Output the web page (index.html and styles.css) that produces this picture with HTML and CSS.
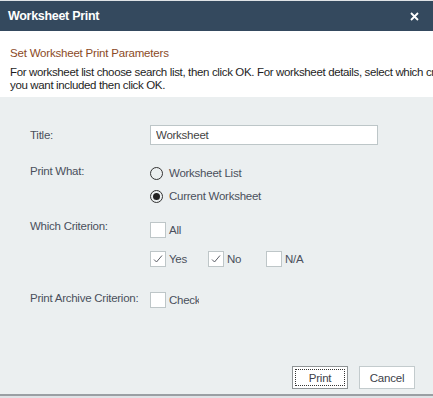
FILE: index.html
```html
<!DOCTYPE html>
<html lang="en">
<head>
    <meta charset="UTF-8">
    <title>Worksheet Print</title>
    <link rel="stylesheet" href="styles.css">
</head>
<body>

<div class="dialog">
    <div class="titlebar">
        <span class="title">Worksheet Print</span>
        <svg class="close" width="9" height="9" viewBox="0 0 9 9">
            <path d="M1 1 L8 8 M8 1 L1 8" stroke="#ffffff" stroke-width="1.8"/>
        </svg>
    </div>

    <div class="header">
        <h4>Set Worksheet Print Parameters</h4>
        <p>For worksheet list choose search list, then click OK. For worksheet details, select which criteria<br>you want included then click OK.</p>
    </div>

    <div class="body">
        <div class="row row-title">
            <label>Title:</label>
            <input type="text" class="text-input" value="Worksheet">
        </div>

        <div class="row row-what">
            <label>Print What:</label>
            <div class="options radios">
                <div class="option"><span class="radio"></span>Worksheet List</div>
                <div class="option"><span class="radio checked"></span>Current Worksheet</div>
            </div>
        </div>

        <div class="row row-criterion">
            <label>Which Criterion:</label>
            <div class="options checks">
                <div class="option"><span class="check"></span>All</div>
                <div class="option-line">
                    <div class="option w58"><span class="check"><svg width="14" height="14" viewBox="0 0 14 14"><path d="M3 7.5 L5.5 10 L11 3.5" fill="none" stroke="#5a5d66" stroke-width="1"/></svg></span>Yes</div>
                    <div class="option w58"><span class="check"><svg width="14" height="14" viewBox="0 0 14 14"><path d="M3 7.5 L5.5 10 L11 3.5" fill="none" stroke="#5a5d66" stroke-width="1"/></svg></span>No</div>
                    <div class="option"><span class="check"></span>N/A</div>
                </div>
            </div>
        </div>

        <div class="row row-archive">
            <label>Print Archive Criterion:</label>
            <div class="option clip"><span class="check"></span>CheckEdit</div>
        </div>

        <div class="buttons">
            <button class="btn focused">Print</button>
            <button class="btn">Cancel</button>
        </div>
    </div>
</div>

</body>
</html>
```

FILE: styles.css
```css
* {
    margin: 0;
    padding: 0;
    box-sizing: border-box;
    font-family: 'Liberation Sans', Arial, sans-serif;
}

body {
    width: 433px;
    height: 398px;
    overflow: hidden;
    background-color: #dfe3e6;
}

.dialog {
    margin-top: 1px;
    width: 433px;
    height: 395px;
    border-bottom: 2px solid #9a9fa3;
    display: flex;
    flex-direction: column;
}

.titlebar {
    height: 30px;
    flex-shrink: 0;
    background-color: #34495e;
    color: #ffffff;
    display: flex;
    align-items: center;
    justify-content: space-between;
    padding: 0 14px 0 8px;
}

.title {
    font-size: 12.5px;
    font-weight: bold;
    letter-spacing: -0.3px;
}

.header {
    background-color: #ffffff;
    height: 66px;
    flex-shrink: 0;
    padding: 15px 0 0 10px;
    white-space: nowrap;
    overflow: hidden;
    font-size: 11.5px;
    letter-spacing: -0.35px;
}

.header h4 {
    font-weight: normal;
    font-size: 11.5px;
    line-height: 14px;
    letter-spacing: -0.2px;
    color: #8b4a26;
    margin-bottom: 6px;
}

.header p {
    line-height: 13px;
    color: #1e1e1e;
}

.body {
    flex: 1;
    background-color: #ebeff0;
    padding: 28px 0 0 30px;
    display: flex;
    flex-direction: column;
    color: #4a4f5c;
    font-size: 11.5px;
    line-height: 14px;
    letter-spacing: -0.25px;
}

.row {
    display: flex;
    align-items: flex-start;
}

.row label {
    width: 120px;
    flex-shrink: 0;
}

.row-title {
    align-items: center;
}

.text-input {
    width: 228px;
    height: 20px;
    border: 1px solid #bdc6c8;
    background-color: #ffffff;
    padding: 0 5px;
    font-size: 11.5px;
    letter-spacing: -0.25px;
    color: #444;
    outline: none;
}

.options {
    display: flex;
    flex-direction: column;
}

.option {
    display: flex;
    align-items: center;
    height: 16px;
    white-space: nowrap;
}

.row-what {
    margin-top: 19px;
}

.radios {
    gap: 7px;
    margin-top: 1px;
}

.radio {
    width: 13px;
    height: 13px;
    flex-shrink: 0;
    border: 1px solid #333;
    border-radius: 50%;
    margin-right: 6px;
    display: flex;
    align-items: center;
    justify-content: center;
}

.radio.checked::after {
    content: "";
    width: 7px;
    height: 7px;
    border-radius: 50%;
    background-color: #222;
}

.row-criterion {
    margin-top: 15px;
}

.checks {
    gap: 13px;
    margin-top: 3px;
}

.option-line {
    display: flex;
}

.w58 {
    width: 58px;
}

.check {
    width: 16px;
    height: 16px;
    flex-shrink: 0;
    border: 1px solid #bec6c8;
    background-color: #ffffff;
    margin-right: 3px;
    display: flex;
    align-items: center;
    justify-content: center;
}

.row-archive {
    margin-top: 24px;
}

.clip {
    width: 49px;
    overflow: hidden;
    margin-top: 1px;
}

.buttons {
    margin-top: auto;
    margin-bottom: 5px;
    display: flex;
    justify-content: flex-end;
    gap: 11px;
    padding-right: 18px;
}

.btn {
    width: 56px;
    height: 23px;
    background-color: #ffffff;
    border: 1px solid #c3cbcd;
    font-size: 11.5px;
    letter-spacing: -0.2px;
    color: #3d3f4a;
}

.btn.focused {
    border-color: #8f9496;
    outline: 1px dotted #333;
    outline-offset: -4px;
}
```
